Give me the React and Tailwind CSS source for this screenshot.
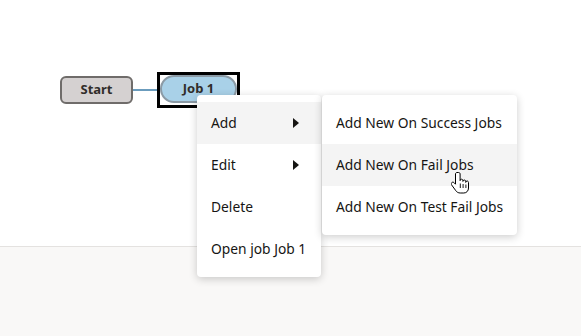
import React from 'react';

function Arrow() {
  return (
    <svg width="6" height="10" viewBox="0 0 6 10" className="shrink-0">
      <path d="M0 0 L6 5 L0 10 Z" fill="#161513" />
    </svg>
  );
}

function HandCursor() {
  return (
    <svg width="20" height="24" viewBox="0 0 20 24" className="absolute left-[451px] top-[171px]">
      <path
        d="M6 1.5c-.9 0-1.5.7-1.5 1.5v10.2l-1.4-1.5c-.7-.7-1.8-.7-2.4 0-.6.6-.6 1.5-.1 2.2l4.2 5.8c1 1.4 2.5 2.3 4.4 2.3h3.6c2.8 0 4.7-2.2 4.7-5v-5.5c0-.8-.6-1.5-1.4-1.5s-1.4.6-1.4 1.4v-1c0-.8-.6-1.4-1.4-1.4s-1.4.6-1.4 1.4v-.8c0-.8-.6-1.4-1.4-1.4s-1.4.6-1.4 1.4V3c0-.8-.6-1.5-1.5-1.5z"
        fill="#fff"
        stroke="#000"
        strokeWidth="1"
        strokeLinejoin="round"
      />
      <path d="M9.3 12.5v4.5M12.1 13v4M14.9 13.5v3.5" stroke="#000" strokeWidth="0.9" />
    </svg>
  );
}

export default function App() {
  const mainItems = [
    { label: 'Add', sub: true, hover: true },
    { label: 'Edit', sub: true },
    { label: 'Delete' },
    { label: 'Open job Job 1' },
  ];
  const subItems = [
    { label: 'Add New On Success Jobs' },
    { label: 'Add New On Fail Jobs', hover: true },
    { label: 'Add New On Test Fail Jobs' },
  ];

  return (
    <div className="relative flex h-[336px] w-[581px] flex-col overflow-hidden bg-white font-['Noto_Sans','Open_Sans',sans-serif] text-[#161513]">
      <div className="relative h-[247px] border-b border-[#e4e2e0] bg-white">
        {/* diagram canvas */}
        <div className="absolute left-[60px] top-[76px] flex h-[28px] w-[73px] items-center justify-center rounded-[6px] border-2 border-[#6f6c6a] bg-[#d5d1d1] text-[13px] font-bold text-[#312d2a]">
          Start
        </div>
        <div className="absolute left-[133px] top-[89px] h-[2px] w-[27px] bg-[#6b9cbd]" />
        <div className="absolute left-[157px] top-[72px] h-[36px] w-[83px] border-[3px] border-black bg-white" />
        <div className="absolute left-[160px] top-[75px] flex h-[28px] w-[77px] items-center justify-center rounded-full border-2 border-[#8b9aa5] bg-[#a9d1e8] text-[13px] font-bold text-[#312d2a]">
          Job 1
        </div>
      </div>
      <div className="flex-1 bg-[#f9f8f7]" />

      {/* context menu */}
      <div className="absolute left-[197px] top-[95px] w-[124px] rounded-[4px] bg-white py-[7px] shadow-[0_2px_8px_rgba(0,0,0,0.2)]">
        {mainItems.map(item => (
          <div
            key={item.label}
            className={`flex h-[42px] items-center justify-between pl-[14px] pr-[22px] text-[13.8px] ${item.hover ? 'bg-[#f4f4f4]' : ''}`}
          >
            <span className="whitespace-nowrap">{item.label}</span>
            {item.sub && <Arrow />}
          </div>
        ))}
      </div>

      <div className="absolute left-[322px] top-[95px] w-[195px] rounded-[4px] bg-white py-[7px] shadow-[0_2px_8px_rgba(0,0,0,0.2)]">
        {subItems.map(item => (
          <div
            key={item.label}
            className={`flex h-[42px] items-center pl-[14px] text-[13.8px] ${item.hover ? 'bg-[#f4f4f4]' : ''}`}
          >
            <span className="whitespace-nowrap">{item.label}</span>
          </div>
        ))}
      </div>

      <HandCursor />
    </div>
  );
}
